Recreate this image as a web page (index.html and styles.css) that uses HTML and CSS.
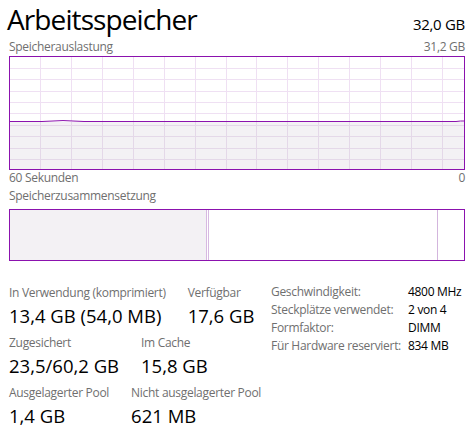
FILE: index.html
```html
<!DOCTYPE html>
<html lang="de">
<head>
<meta charset="utf-8">
<title>Arbeitsspeicher</title>
<link rel="stylesheet" href="styles.css">
</head>
<body>
<main class="panel">
  <header class="head">
    <h1 class="title">Arbeitsspeicher</h1>
    <span class="total">32,0 GB</span>
  </header>

  <div class="axis axis-top"><span>Speicherauslastung</span><span>31,2 GB</span></div>
  <svg class="usage" width="456" height="114" viewBox="0 0 456 114">
    <rect x="1" y="66" width="454" height="47" fill="#f3f1f4"/>
    <g stroke="#efe0f3" stroke-width="1">
      <line x1="1" x2="455" y1="12.5" y2="12.5"/>
      <line x1="1" x2="455" y1="23.5" y2="23.5"/>
      <line x1="1" x2="455" y1="35.5" y2="35.5"/>
      <line x1="1" x2="455" y1="46.5" y2="46.5"/>
      <line x1="1" x2="455" y1="57.5" y2="57.5"/>
      <line x1="31.5" x2="31.5" y1="1" y2="65"/>
      <line x1="62.5" x2="62.5" y1="1" y2="65"/>
      <line x1="93.5" x2="93.5" y1="1" y2="65"/>
      <line x1="124.5" x2="124.5" y1="1" y2="65"/>
      <line x1="155.5" x2="155.5" y1="1" y2="65"/>
      <line x1="186.5" x2="186.5" y1="1" y2="65"/>
      <line x1="217.5" x2="217.5" y1="1" y2="65"/>
      <line x1="247.5" x2="247.5" y1="1" y2="65"/>
      <line x1="278.5" x2="278.5" y1="1" y2="65"/>
      <line x1="309.5" x2="309.5" y1="1" y2="65"/>
      <line x1="340.5" x2="340.5" y1="1" y2="65"/>
      <line x1="371.5" x2="371.5" y1="1" y2="65"/>
      <line x1="402.5" x2="402.5" y1="1" y2="65"/>
      <line x1="433.5" x2="433.5" y1="1" y2="65"/>
    </g>
    <g stroke="#e4d8e8" stroke-width="1">
      <line x1="1" x2="455" y1="69.5" y2="69.5"/>
      <line x1="1" x2="455" y1="80.5" y2="80.5"/>
      <line x1="1" x2="455" y1="92.5" y2="92.5"/>
      <line x1="1" x2="455" y1="103.5" y2="103.5"/>
      <line x1="31.5" x2="31.5" y1="66" y2="113"/>
      <line x1="62.5" x2="62.5" y1="66" y2="113"/>
      <line x1="93.5" x2="93.5" y1="66" y2="113"/>
      <line x1="124.5" x2="124.5" y1="66" y2="113"/>
      <line x1="155.5" x2="155.5" y1="66" y2="113"/>
      <line x1="186.5" x2="186.5" y1="66" y2="113"/>
      <line x1="217.5" x2="217.5" y1="66" y2="113"/>
      <line x1="247.5" x2="247.5" y1="66" y2="113"/>
      <line x1="278.5" x2="278.5" y1="66" y2="113"/>
      <line x1="309.5" x2="309.5" y1="66" y2="113"/>
      <line x1="340.5" x2="340.5" y1="66" y2="113"/>
      <line x1="371.5" x2="371.5" y1="66" y2="113"/>
      <line x1="402.5" x2="402.5" y1="66" y2="113"/>
      <line x1="433.5" x2="433.5" y1="66" y2="113"/>
    </g>
    <path d="M1 65.5 L33 65.5 Q54 63.6 75 65.5 L447 65.5 Q452 64.8 455 65" fill="none" stroke="#8b12ae" stroke-width="1"/>
    <rect x="0.5" y="0.5" width="455" height="113" fill="none" stroke="#8b12ae" stroke-width="1"/>
  </svg>
  <div class="axis"><span>60 Sekunden</span><span>0</span></div>

  <div class="axis axis-comp"><span>Speicherzusammensetzung</span></div>
  <svg class="composition" width="456" height="52" viewBox="0 0 456 52">
    <rect x="1" y="1" width="197" height="50" fill="#f3f1f4"/>
    <line x1="197.5" x2="197.5" y1="1" y2="51" stroke="#d7b9e1"/>
    <line x1="199.5" x2="199.5" y1="1" y2="51" stroke="#d7b9e1"/>
    <line x1="428.5" x2="428.5" y1="1" y2="51" stroke="#d3b5dd"/>
    <rect x="0.5" y="0.5" width="455" height="51" fill="none" stroke="#8b12ae" stroke-width="1"/>
  </svg>

  <section class="stats">
    <div class="main-stats">
      <div class="stat-row">
        <div class="stat"><div class="label">In Verwendung (komprimiert)</div><div class="value">13,4 GB (54,0 MB)</div></div>
        <div class="stat"><div class="label">Verfügbar</div><div class="value">17,6 GB</div></div>
      </div>
      <div class="stat-row">
        <div class="stat"><div class="label">Zugesichert</div><div class="value">23,5/60,2 GB</div></div>
        <div class="stat"><div class="label">Im Cache</div><div class="value">15,8 GB</div></div>
      </div>
      <div class="stat-row">
        <div class="stat"><div class="label">Ausgelagerter Pool</div><div class="value">1,4 GB</div></div>
        <div class="stat"><div class="label">Nicht ausgelagerter Pool</div><div class="value">621 MB</div></div>
      </div>
    </div>
    <dl class="info">
      <dt>Geschwindigkeit:</dt><dd>4800 MHz</dd>
      <dt>Steckplätze verwendet:</dt><dd>2 von 4</dd>
      <dt>Formfaktor:</dt><dd>DIMM</dd>
      <dt>Für Hardware reserviert:</dt><dd>834 MB</dd>
    </dl>
  </section>
</main>
</body>
</html>
```
FILE: styles.css
```css
* { box-sizing: border-box; }

html, body {
  margin: 0;
  padding: 0;
  background: #ffffff;
}

body {
  font-family: "Open Sans", "Noto Sans", sans-serif;
  color: #000;
  width: 476px;
  height: 432px;
  overflow: hidden;
}

.panel {
  display: flex;
  flex-direction: column;
}

.head {
  display: flex;
  justify-content: space-between;
  align-items: baseline;
  padding: 0 11px 0 7px;
}

.title {
  margin: 0;
  font-size: 28px;
  font-weight: 400;
  line-height: 38px;
  letter-spacing: -0.9px;
}

.total {
  font-size: 15px;
  letter-spacing: -0.3px;
}

.axis {
  display: flex;
  justify-content: space-between;
  padding: 0 11px 0 9px;
  font-size: 12px;
  line-height: 16px;
  color: #6f6f6f;
  letter-spacing: -0.3px;
}

.axis-top { margin-top: 1px; }
.axis-comp { margin-top: 2px; }

.usage {
  display: block;
  margin: 1px 0 0 9px;
}

.composition {
  display: block;
  margin: 5px 0 0 9px;
}

.stats {
  display: flex;
  align-items: flex-start;
  margin-top: 22px;
  padding-left: 9px;
}

.main-stats {
  flex: 0 0 262px;
  display: flex;
  flex-direction: column;
  gap: 8px;
  padding-top: 2px;
}

.stat-row {
  display: flex;
  gap: 22px;
}

.label {
  font-size: 12px;
  line-height: 16px;
  color: #6f6f6f;
  letter-spacing: -0.3px;
  white-space: nowrap;
}

.value {
  margin-top: 4px;
  font-size: 18.5px;
  line-height: 22px;
  letter-spacing: 0;
  white-space: nowrap;
}

.info {
  margin: 0;
  display: grid;
  grid-template-columns: 137px auto;
  font-size: 12px;
  line-height: 18px;
  letter-spacing: -0.3px;
}

.info dt {
  color: #6f6f6f;
  white-space: nowrap;
}

.info dd {
  margin: 0;
  color: #000;
  white-space: nowrap;
}
```
